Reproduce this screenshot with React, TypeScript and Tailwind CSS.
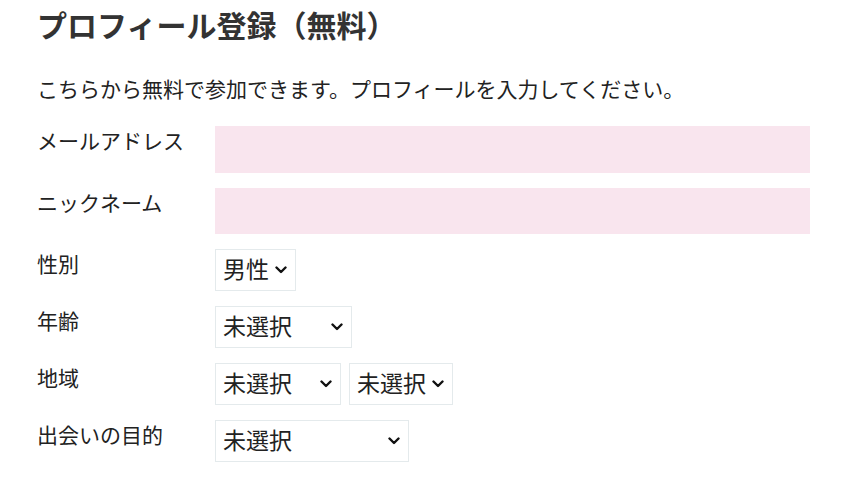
const font = {
  fontFamily: '"Noto Sans CJK JP", "Noto Sans", sans-serif',
};

function Chevron() {
  return (
    <svg width="12" height="8" viewBox="0 0 12 8" fill="none" className="shrink-0">
      <path d="M1.5 1.5 L6 6 L10.5 1.5" stroke="#111" strokeWidth="2.4" strokeLinecap="round" strokeLinejoin="round" />
    </svg>
  );
}

function Select({ value, width }: { value: string; width: string }) {
  return (
    <div
      className={`flex h-[42px] items-center justify-between border border-[#e4eaec] bg-white pb-[3px] pl-[7px] pr-[8px] text-[23px] text-[#222] ${width}`}>
      <span className="leading-none">{value}</span>
      <span className="pt-[3px]">
        <Chevron />
      </span>
    </div>
  );
}

function Row({ label, children }: { label: string; children: React.ReactNode }) {
  return (
    <div className="flex items-start">
      <div className="w-[178px] shrink-0 text-[21px] leading-[28px] text-[#222]">{label}</div>
      <div className="flex flex-1 gap-[8px]">{children}</div>
    </div>
  );
}

export default function App() {
  return (
    <div className="min-h-[485px] bg-white px-[37px] pt-[4px]" style={font}>
      <h1 className="text-[30px] font-bold leading-[40px] text-[#333]">
        プロフィール登録（無料）
      </h1>
      <p className="mt-[29px] text-[21px] leading-[30px] text-[#222]">
        こちらから無料で参加できます。プロフィールを入力してください。
      </p>

      <div className="mt-[23px] flex flex-col gap-[15px]">
        <Row label="メールアドレス">
          <div className="h-[47px] w-full bg-[#f9e5ee]" />
        </Row>
        <Row label="ニックネーム">
          <div className="h-[46px] w-full bg-[#f9e5ee]" />
        </Row>
        <Row label="性別">
          <Select value="男性" width="w-[81px]" />
        </Row>
        <Row label="年齢">
          <Select value="未選択" width="w-[137px]" />
        </Row>
        <Row label="地域">
          <Select value="未選択" width="w-[126px]" />
          <Select value="未選択" width="w-[104px]" />
        </Row>
        <Row label="出会いの目的">
          <Select value="未選択" width="w-[194px]" />
        </Row>
      </div>
    </div>
  );
}
